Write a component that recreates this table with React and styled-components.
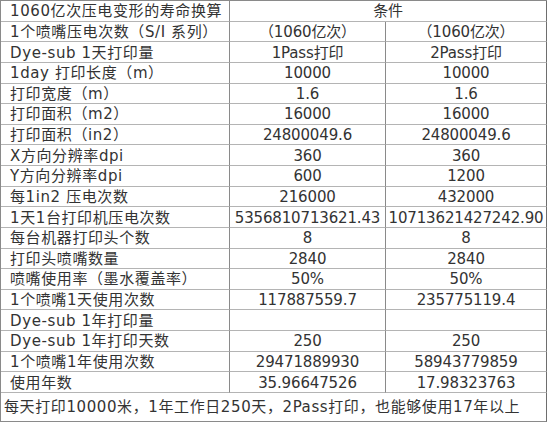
import React from "react";
import styled, { createGlobalStyle } from "styled-components";

const GlobalStyle = createGlobalStyle`
  html, body {
    margin: 0;
    padding: 0;
    background: #ffffff;
  }
  body {
    font-family: "DejaVu Sans", "Noto Sans CJK SC", sans-serif;
    color: #333333;
  }
`;

const rows = [
  ["1个喷嘴压电次数（S/I 系列）", "（1060亿次）", "（1060亿次）"],
  ["Dye-sub 1天打印量", "1Pass打印", "2Pass打印"],
  ["1day 打印长度（m）", "10000", "10000"],
  ["打印宽度（m）", "1.6", "1.6"],
  ["打印面积（m2）", "16000", "16000"],
  ["打印面积（in2）", "24800049.6", "24800049.6"],
  ["X方向分辨率dpi", "360", "360"],
  ["Y方向分辨率dpi", "600", "1200"],
  ["每1in2 压电次数", "216000", "432000"],
  ["1天1台打印机压电次数", "5356810713621.43", "10713621427242.90"],
  ["每台机器打印头个数", "8", "8"],
  ["打印头喷嘴数量", "2840", "2840"],
  ["喷嘴使用率（墨水覆盖率）", "50%", "50%"],
  ["1个喷嘴1天使用次数", "117887559.7", "235775119.4"],
  ["Dye-sub 1年打印量", "", ""],
  ["Dye-sub 1年打印天数", "250", "250"],
  ["1个喷嘴1年使用次数", "29471889930", "58943779859"],
  ["使用年数", "35.96647526", "17.98323763"],
];

const App = () => {
  return (
    <>
      <GlobalStyle />
      <Sheet>
        <Label>1060亿次压电变形的寿命换算</Label>
        <Value span={2} last>条件</Value>
        {rows.map((r, i) => (
          <React.Fragment key={i}>
            <Label>{r[0]}</Label>
            <Value>{r[1]}</Value>
            <Value last>{r[2]}</Value>
          </React.Fragment>
        ))}
        <Note>每天打印10000米，1年工作日250天，2Pass打印，也能够使用17年以上</Note>
      </Sheet>
    </>
  );
};

const Sheet = styled.div`
  display: grid;
  grid-template-columns: 229px 156px 161px;
  grid-template-rows: repeat(19, 20.63px) 29px;
  width: 547px;
  border-top: 1px solid #8a8a8a;
  border-left: 1px solid #8a8a8a;
  box-sizing: border-box;
  font-size: 15px;
`;

const Cell = styled.div`
  display: flex;
  align-items: center;
  white-space: nowrap;
  overflow: hidden;
  line-height: 20px;
  padding-top: 1px;
  box-sizing: border-box;
  border-bottom: 1px solid #b4b4b4;
  border-right: 1px solid #8a8a8a;
`;

const Label = styled(Cell)`
  padding-left: 9px;
  letter-spacing: 0.6px;
`;

const Value = styled(Cell)`
  justify-content: center;
  letter-spacing: -0.15px;
  grid-column: span ${(p) => p.span || 1};
  border-right-color: ${(p) => (p.last ? "#6e6e6e" : "#8a8a8a")};
`;

const Note = styled(Cell)`
  grid-column: 1 / -1;
  padding-left: 3px;
  letter-spacing: 0.6px;
  border-bottom: 1px solid #8a8a8a;
  border-right-color: #6e6e6e;
`;

export default App;
